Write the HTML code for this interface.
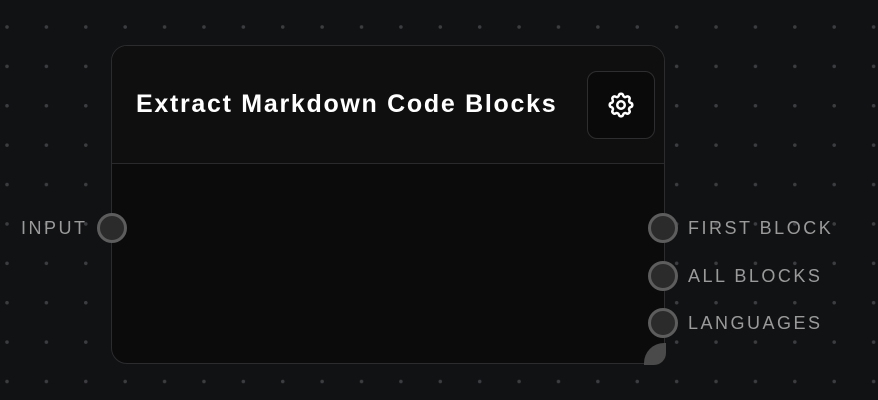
<!DOCTYPE html>
<html><head><style>
body{margin:0;width:878px;height:400px;overflow:hidden;background-color:#111214;
background-image:radial-gradient(circle,#3c3d40 1.6px,transparent 2px);
background-size:39.4px 39.4px;background-position:-12.7px 7.3px;
font-family:"Liberation Sans",sans-serif;position:relative}
.node{position:absolute;left:111px;top:45px;width:552px;height:317px;border:1.5px solid #2c2c2e;border-radius:16px;background:#0b0b0c;overflow:hidden}
.head{height:117px;background:#0f0f10;border-bottom:1.5px solid #2a2a2c;position:relative}
.title{position:absolute;left:24px;top:44px;color:#fff;font-size:25px;font-weight:bold;letter-spacing:1.7px}
.gear{position:absolute;left:475px;top:25px;width:66px;height:66px;border:1.5px solid #2e2e30;border-radius:10px;background:#0a0a0b}
.gear svg{position:absolute;left:18px;top:18px}
.port{position:absolute;width:24px;height:24px;border:3px solid #5d5d5d;border-radius:50%;background:#2b2b2c}
.lbl{position:absolute;color:#9a9a9a;font-size:18px;letter-spacing:2.5px}
.corner{position:absolute;left:644px;top:343px;width:22px;height:22px;background:#4a4a4a;border-radius:20px 0 12px 0}
</style></head><body>
<div class="node"><div class="head"><div class="title">Extract Markdown Code Blocks</div>
<div class="gear"><svg width="30" height="30" viewBox="0 0 24 24" fill="none" stroke="#fff" stroke-width="2" stroke-linejoin="round"><path d="M10.3 4.3c.4-1.7 3-1.7 3.4 0a1.7 1.7 0 0 0 2.6 1.1c1.5-.9 3.3.8 2.4 2.4a1.7 1.7 0 0 0 1 2.5c1.800.4 1.8 3 0 3.4a1.7 1.7 0 0 0-1 2.6c.9 1.5-.9 3.3-2.4 2.4a1.7 1.7 0 0 0-2.6 1c-.4 1.8-3 1.8-3.4 0a1.7 1.7 0 0 0-2.6-1c-1.5.9-3.3-.9-2.4-2.4a1.7 1.7 0 0 0-1-2.6c-1.8-.4-1.8-3 0-3.4a1.7 1.7 0 0 0 1-2.5c-.9-1.6.9-3.3 2.4-2.4a1.7 1.7 0 0 0 2.600-1.1z"/><circle cx="12" cy="12" r="3"/></svg></div></div></div>
<div class="corner"></div>
<div class="port" style="left:97px;top:213px"></div>
<div class="lbl" style="left:21px;top:218px">INPUT</div>
<div class="port" style="left:648px;top:213px"></div>
<div class="lbl" style="left:688px;top:218px">FIRST BLOCK</div>
<div class="port" style="left:648px;top:261px"></div>
<div class="lbl" style="left:688px;top:266px">ALL BLOCKS</div>
<div class="port" style="left:648px;top:308px"></div>
<div class="lbl" style="left:688px;top:313px">LANGUAGES</div>
</body></html>
